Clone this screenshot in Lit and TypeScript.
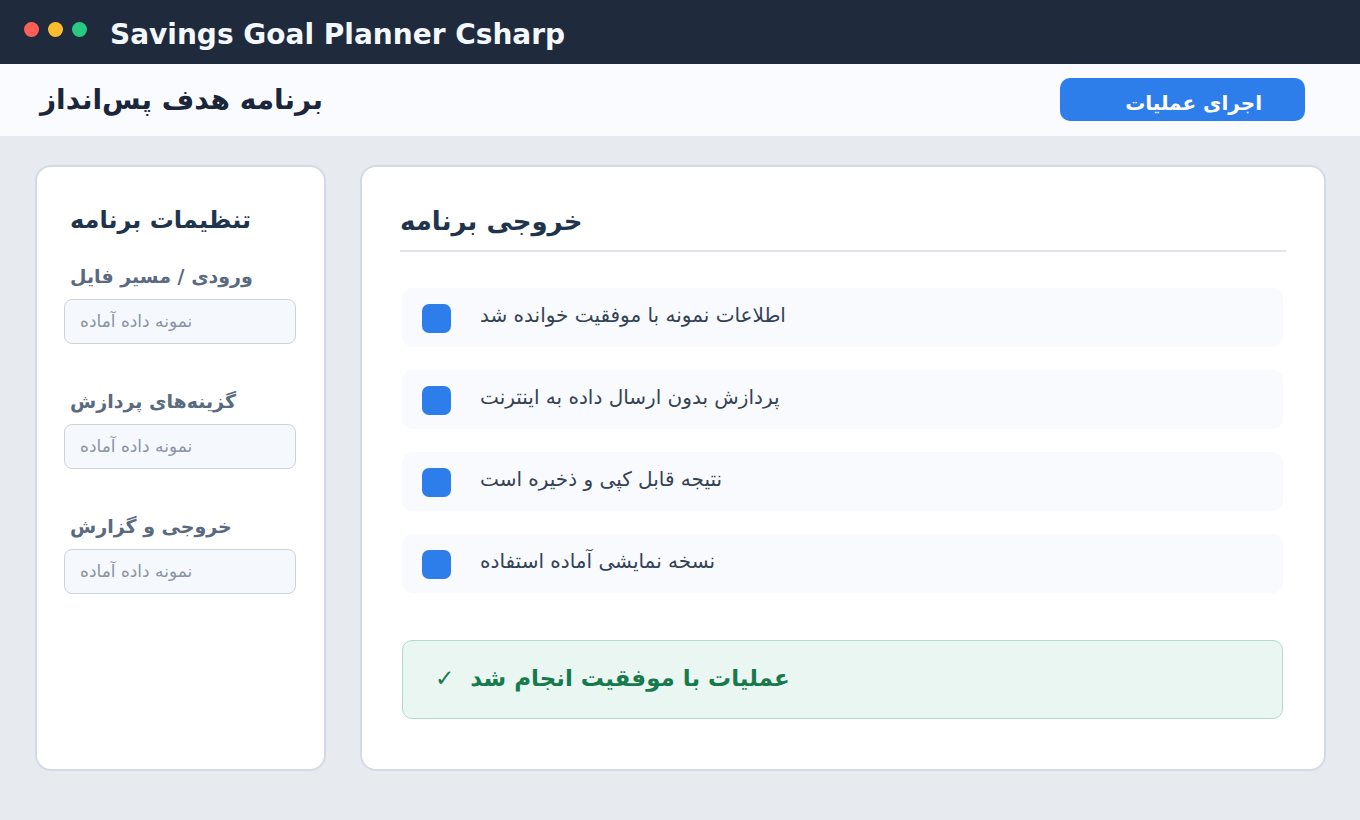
import { LitElement, html, css } from "lit";
import { customElement, state } from "lit/decorators.js";

@customElement("app-root")
export class AppRoot extends LitElement {
  static styles = css`
    :host {
      display: flex;
      flex-direction: column;
      min-height: 100vh;
      box-sizing: border-box;
      background: #e7ebf0;
      color: #1b263b;
      font-family: "DejaVu Sans", sans-serif;
    }
    * {
      box-sizing: border-box;
    }
    h1,
    h2,
    p,
    ul {
      margin: 0;
      padding: 0;
    }
    .titlebar {
      display: flex;
      align-items: flex-start;
      gap: 23px;
      height: 64px;
      padding: 18px 24px 0;
      background: #1f2b3d;
      color: #f3f8ff;
    }
    .dots {
      display: flex;
      gap: 9px;
      padding-top: 4px;
    }
    .dot {
      width: 15px;
      height: 15px;
      border-radius: 50%;
    }
    .red {
      background: #ff5f57;
    }
    .yellow {
      background: #ffbd2e;
    }
    .green {
      background: #28c981;
    }
    .app-name {
      font-size: 28px;
      font-weight: 700;
      line-height: 34px;
    }
    .header {
      display: flex;
      align-items: flex-start;
      justify-content: space-between;
      height: 72px;
      padding: 14px 55px 0 40px;
      background: #f9fbff;
    }
    .page-title {
      font-size: 28px;
      line-height: 44px;
    }
    .run {
      width: 245px;
      height: 43px;
      padding: 6px 43px 0 0;
      border: 0;
      border-radius: 10px;
      background: #2d7eea;
      color: #fff;
      font: 700 20px/24px "DejaVu Sans", sans-serif;
      text-align: right;
      cursor: pointer;
    }
    .main {
      flex: 1;
      display: grid;
      grid-template-columns: 291px 1fr;
      gap: 34px;
      padding: 29px 34px 49px 35px;
    }
    .card {
      border: 2px solid #d3dae5;
      border-radius: 16px;
      background: #fff;
    }
    .settings {
      padding: 37px 28px 28px 27px;
    }
    .card-title {
      color: #1f344d;
      text-align: left;
    }
    .settings .card-title {
      padding-left: 6px;
      margin-bottom: 28px;
      font-size: 24px;
      line-height: 32px;
    }
    .field {
      display: flex;
      flex-direction: column;
      gap: 11px;
      margin-bottom: 45px;
    }
    .label {
      padding-left: 6px;
      color: #5a6a80;
      font-size: 19px;
      font-weight: 700;
      line-height: 24px;
      text-align: left;
    }
    .input {
      width: 100%;
      height: 45px;
      padding: 0 15px 2px;
      border: 1px solid #cbd3de;
      border-radius: 8px;
      background: #f5f9fd;
      color: #8b93a5;
      font: 17px/24px "DejaVu Sans", sans-serif;
      text-align: left;
    }
    .output {
      padding: 37px 38px 38px;
    }
    .output .card-title {
      padding-bottom: 12px;
      border-bottom: 2px solid #e1e4ea;
      font-size: 26px;
      line-height: 34px;
    }
    .results {
      display: grid;
      gap: 23px;
      padding: 36px 3px 47px 2px;
      list-style: none;
    }
    .result {
      display: flex;
      align-items: flex-start;
      gap: 29px;
      height: 59px;
      padding: 16px 20px 0;
      border-radius: 10px;
      background: #f8fafd;
      color: #344256;
      font-size: 20px;
      line-height: 22px;
    }
    .marker {
      width: 29px;
      height: 29px;
      border-radius: 7px;
      background: #2d7eea;
    }
    .success {
      display: flex;
      align-items: center;
      gap: 16px;
      height: 79px;
      margin: 0 3px 0 2px;
      padding: 0 32px 4px;
      border: 1px solid #b2dacb;
      border-radius: 10px;
      background: #e9f6f1;
      color: #167a4d;
      font-size: 23px;
      font-weight: 700;
      line-height: 32px;
    }
  `;

  @state() private fields = ["ورودی / مسیر فایل", "گزینه‌های پردازش", "خروجی و گزارش"];

  @state() private results = [
    "اطلاعات نمونه با موفقیت خوانده شد",
    "پردازش بدون ارسال داده به اینترنت",
    "نتیجه قابل کپی و ذخیره است",
    "نسخه نمایشی آماده استفاده",
  ];

  render() {
    return html`
      <div class="titlebar">
        <div class="dots">
          <span class="dot red"></span>
          <span class="dot yellow"></span>
          <span class="dot green"></span>
        </div>
        <div class="app-name">Savings Goal Planner Csharp</div>
      </div>
      <header class="header">
        <h1 class="page-title" dir="rtl">برنامه هدف پس‌انداز</h1>
        <button class="run" type="button" dir="rtl">اجرای عملیات</button>
      </header>
      <main class="main">
        <section class="card settings">
          <h2 class="card-title" dir="rtl">تنظیمات برنامه</h2>
          ${this.fields.map(
            (name, i) => html`
              <div class="field">
                <label class="label" for="field-${i}" dir="rtl">${name}</label>
                <input class="input" id="field-${i}" type="text" dir="rtl" value="نمونه داده آماده" />
              </div>
            `
          )}
        </section>
        <section class="card output">
          <h2 class="card-title" dir="rtl">خروجی برنامه</h2>
          <ul class="results">
            ${this.results.map(
              (text) => html`
                <li class="result">
                  <span class="marker"></span>
                  <span dir="rtl">${text}</span>
                </li>
              `
            )}
          </ul>
          <p class="success" role="status">
            <span>✓</span>
            <span dir="rtl">عملیات با موفقیت انجام شد</span>
          </p>
        </section>
      </main>
    `;
  }
}
